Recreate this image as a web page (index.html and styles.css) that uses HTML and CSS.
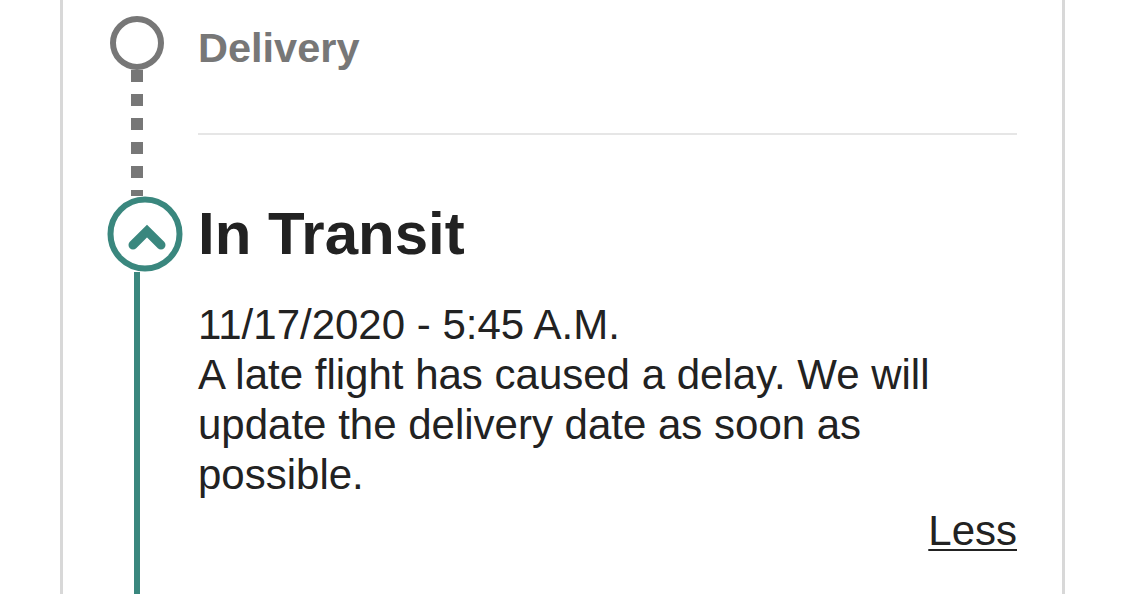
FILE: index.html
```html
<!DOCTYPE html>
<html lang="en">
<head>
    <meta charset="UTF-8">
    <meta name="viewport" content="width=device-width, initial-scale=1.0">
    <title>Tracking</title>
    <link rel="stylesheet" href="styles.css">
</head>
<body>
    <div class="card">
        <!-- Upcoming step -->
        <div class="step">
            <div class="rail">
                <svg class="marker marker-pending" width="54" height="54" viewBox="0 0 54 54">
                    <circle cx="27" cy="27" r="24" fill="none" stroke="#777" stroke-width="6"/>
                </svg>
                <div class="dots"></div>
            </div>
            <div class="step-body">
                <h3 class="step-title pending">Delivery</h3>
                <hr class="divider">
            </div>
        </div>

        <!-- Current step -->
        <div class="step">
            <div class="rail">
                <svg class="marker marker-current" width="76" height="76" viewBox="0 0 76 76">
                    <circle cx="38" cy="38" r="34.5" fill="#fff" stroke="#3a877e" stroke-width="6"/>
                    <polyline points="26,49 40,35 54,49" fill="none" stroke="#3a877e" stroke-width="9" stroke-linecap="round" stroke-linejoin="miter"/>
                </svg>
                <div class="line"></div>
            </div>
            <div class="step-body">
                <h2 class="step-title current">In Transit</h2>
                <p class="details">
                    11/17/2020 - 5:45 A.M.<br>
                    A late flight has caused a delay. We will update the delivery date as soon as possible.
                </p>
                <div class="toggle"><a href="#">Less</a></div>
            </div>
        </div>
    </div>
</body>
</html>
```

FILE: styles.css
```css
body {
    margin: 0;
    padding: 0;
    background: #fff;
    font-family: "Liberation Sans", Arial, Helvetica, sans-serif;
    color: #222;
    overflow: hidden;
}

.card {
    width: 1005px;
    margin-left: 60px;
    padding-right: 45px;
    box-sizing: border-box;
    border-left: 3px solid #d8d8d8;
    border-right: 3px solid #d8d8d8;
}

/* Timeline steps */
.step {
    display: grid;
    grid-template-columns: 135px 1fr;
}

.rail {
    display: flex;
    flex-direction: column;
    align-items: flex-start;
}

.marker {
    display: block;
    flex-shrink: 0;
}

.marker-pending {
    margin: 16px 0 0 47px;
}

.marker-current {
    margin-left: 44px;
}

.dots {
    flex: 1;
    width: 12px;
    margin-left: 68px;
    background: repeating-linear-gradient(to bottom, #777 0, #777 12px, transparent 12px, transparent 24px);
}

.line {
    flex: 1;
    width: 6px;
    margin-left: 71px;
    background: #3a877e;
}

.step-title {
    margin: 0;
    font-weight: bold;
}

.step-title.pending {
    margin-top: 22.5px;
    font-size: 41.5px;
    line-height: 50px;
    color: #777;
}

.step-title.current {
    margin-top: 5px;
    font-size: 60px;
    line-height: 66px;
    color: #222;
}

.divider {
    margin: 60.5px 0 61px;
    border: none;
    height: 2px;
    background: #e6e6e6;
}

.details {
    margin: 33px 0 0;
    font-size: 42px;
    line-height: 50px;
}

.toggle {
    margin-top: 6px;
    padding-bottom: 60px;
    text-align: right;
    font-size: 42px;
    line-height: 50px;
}

.toggle a {
    color: #222;
    text-decoration: underline;
    text-decoration-thickness: 2px;
    text-underline-offset: 4px;
}
```
